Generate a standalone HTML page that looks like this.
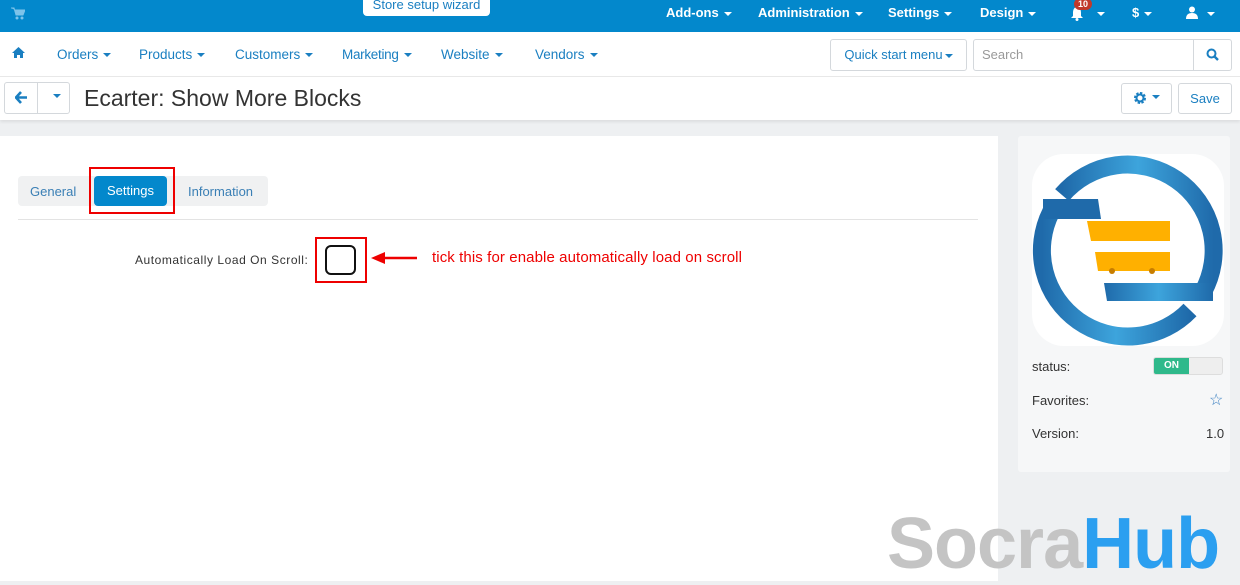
<!DOCTYPE html>
<html><head><style>
*{margin:0;padding:0;box-sizing:border-box}
body{width:1240px;height:581px;overflow:hidden;background:#eef0f2;font-family:"Liberation Sans",Arial,sans-serif;position:relative}
.a{position:absolute}
.top{left:0;top:0;width:1240px;height:32px;background:#0388cc}
.top .t{color:#fff;font-size:13px;font-weight:bold;top:5px}
.car{display:inline-block;width:0;height:0;border-left:4px solid transparent;border-right:4px solid transparent;border-top:4px solid currentColor;vertical-align:middle;margin-left:5px}
.nav{left:0;top:32px;width:1240px;height:45px;background:#fff;border-bottom:1px solid #e8e8e8}
.nav .n{color:#1a7fc1;font-size:13.5px;top:15px;white-space:nowrap}
.btn{border:1px solid #d4d8dc;border-radius:3px;background:#fff}
.tb{left:0;top:77px;width:1240px;height:43px;background:#fff;box-shadow:0 2px 3px rgba(0,0,0,.08)}
</style></head><body>
<div class="a top">
 <svg class="a" style="left:11px;top:7px" width="14" height="13" viewBox="0 0 14 13"><path d="M0 1h3l2 7h7l2-5H4" fill="#7ec3ea" stroke="#7ec3ea"/><circle cx="6" cy="11" r="1.5" fill="#7ec3ea"/><circle cx="11" cy="11" r="1.5" fill="#7ec3ea"/></svg>
 <div class="a" style="left:363px;top:-6px;width:127px;height:22px;background:#fff;border-radius:4px;color:#1a7fc1;font-size:13px;text-align:center;line-height:22px">Store setup wizard</div>
 <div class="a t" style="left:666px">Add-ons<span class="car"></span></div>
 <div class="a t" style="left:758px">Administration<span class="car"></span></div>
 <div class="a t" style="left:888px">Settings<span class="car"></span></div>
 <div class="a t" style="left:980px">Design<span class="car"></span></div>
 <svg class="a" style="left:1070px;top:6px" width="14" height="15" viewBox="0 0 14 15"><path d="M7 1C4 1 3 4 3 7v3L1 12h12l-2-2V7c0-3-1-6-4-6z" fill="#fff"/><circle cx="7" cy="13.5" r="1.5" fill="#fff"/></svg>
 <div class="a" style="left:1074px;top:-2px;background:#c0392b;color:#fff;font-size:9px;font-weight:bold;border-radius:7px;padding:1px 4px">10</div>
 <span class="a car" style="left:1092px;top:12px;color:#fff"></span>
 <div class="a t" style="left:1132px">$<span class="car"></span></div>
 <svg class="a" style="left:1186px;top:6px" width="12" height="13" viewBox="0 0 12 13"><circle cx="6" cy="3.5" r="3" fill="#fff"/><path d="M0 13c0-4 2-6 6-6s6 2 6 6z" fill="#fff"/></svg>
 <span class="a car" style="left:1202px;top:12px;color:#fff"></span>
</div>
<div class="a nav">
 <svg class="a" style="left:12px;top:15px" width="13" height="11" viewBox="0 0 13 11"><path d="M6.5 0L0 6h2v5h3V8h3v3h3V6h2z" fill="#1a7fc1"/></svg>
 <div class="a n" style="left:57px">Orders<span class="car"></span></div>
 <div class="a n" style="left:139px">Products<span class="car"></span></div>
 <div class="a n" style="left:235px">Customers<span class="car"></span></div>
 <div class="a n" style="left:342px;letter-spacing:-0.3px">Marketing<span class="car"></span></div>
 <div class="a n" style="left:441px">Website<span class="car"></span></div>
 <div class="a n" style="left:535px">Vendors<span class="car"></span></div>
 <div class="a btn" style="left:830px;top:7px;width:137px;height:32px;color:#1a7fc1;font-size:13px;line-height:30px;text-align:center">Quick start menu<span class="car" style="margin-left:2px"></span></div>
 <div class="a btn" style="left:973px;top:7px;width:259px;height:32px;color:#999;font-size:13px;line-height:30px;padding-left:8px">Search</div>
 <div class="a" style="left:1193px;top:7px;width:1px;height:32px;background:#d4d8dc"></div>
 <svg class="a" style="left:1206px;top:16px" width="13" height="13" viewBox="0 0 13 13"><circle cx="5.5" cy="5.5" r="4" fill="none" stroke="#1a7fc1" stroke-width="2"/><path d="M8.5 8.5L12 12" stroke="#1a7fc1" stroke-width="2.4"/></svg>
</div>
<div class="a tb">
 <div class="a btn" style="left:4px;top:5px;width:66px;height:32px"></div>
 <div class="a" style="left:37px;top:5px;width:1px;height:32px;background:#d4d8dc"></div>
 <svg class="a" style="left:15px;top:14px" width="13" height="13" viewBox="0 0 13 13"><path d="M6 1L1 6.5 6 12M1.5 6.5H12" fill="none" stroke="#1a7fc1" stroke-width="2.6"/></svg>
 <span class="a car" style="left:48px;top:17px;color:#1a7fc1"></span>
 <div class="a" style="left:84px;top:8px;font-size:23px;color:#333">Ecarter: Show More Blocks</div>
 <div class="a btn" style="left:1121px;top:6px;width:51px;height:31px"></div>
 <svg class="a" style="left:1133px;top:14px" width="14" height="14" viewBox="0 0 14 14"><circle cx="7" cy="7" r="4.5" fill="none" stroke="#1a7fc1" stroke-width="3" stroke-dasharray="2.2 1.3"/><circle cx="7" cy="7" r="3.5" fill="none" stroke="#1a7fc1" stroke-width="2"/></svg>
 <span class="a car" style="left:1147px;top:18px;color:#1a7fc1"></span>
 <div class="a btn" style="left:1178px;top:6px;width:54px;height:31px;color:#1a7fc1;font-size:13px;text-align:center;line-height:29px">Save</div>
</div>
<div class="a" style="left:0;top:136px;width:998px;height:445px;background:#fff"></div>
<div class="a" style="left:18px;top:176px;width:250px;height:30px;background:#f0f1f2;border-radius:4px"></div>
<div class="a" style="left:30px;top:184px;font-size:13px;color:#3a7fb5">General</div>
<div class="a" style="left:94px;top:176px;width:73px;height:30px;background:#0388cc;border-radius:4px;color:#fff;font-size:13px;text-align:center;line-height:30px">Settings</div>
<div class="a" style="left:188px;top:184px;font-size:13px;color:#3a7fb5">Information</div>
<div class="a" style="left:89px;top:167px;width:86px;height:47px;border:2px solid #e00"></div>
<div class="a" style="left:18px;top:219px;width:960px;height:1px;background:#e3e3e3"></div>
<div class="a" style="left:135px;top:253px;font-size:12px;color:#333;letter-spacing:0.55px;white-space:nowrap">Automatically Load On Scroll:</div>
<div class="a" style="left:315px;top:237px;width:52px;height:46px;border:2px solid #e00"></div>
<div class="a" style="left:325px;top:245px;width:31px;height:30px;border:2px solid #111;border-radius:6px"></div>
<svg class="a" style="left:371px;top:251px" width="48" height="14" viewBox="0 0 48 14"><path d="M46 7H10" stroke="#e00" stroke-width="2.4"/><path d="M0 7L14 1v12z" fill="#e00"/></svg>
<div class="a" style="left:432px;top:249px;font-size:15px;color:#e00;letter-spacing:0.1px">tick this for enable automatically load on scroll</div>
<div class="a" style="left:1018px;top:136px;width:212px;height:336px;background:#f6f7f8;border-radius:3px"></div>
<div class="a" style="left:1032px;top:154px;width:192px;height:192px;background:#fff;border-radius:32px;overflow:hidden">
 <svg width="192" height="192" viewBox="0 0 192 192"><defs><linearGradient id="g" x1="0" x2="1"><stop offset="0" stop-color="#1f6aaa"/><stop offset=".5" stop-color="#3da4dc"/><stop offset="1" stop-color="#1f6aaa"/></linearGradient></defs>
 <path d="M30 41 A86 86 0 0 1 171 138" fill="none" stroke="url(#g)" stroke-width="18"/>
 <path d="M72 129H181V147H75z" fill="url(#g)"/>
 <path d="M19 58 A86 86 0 0 0 158 156" fill="none" stroke="url(#g)" stroke-width="18"/>
 <path d="M11 45H66L69 65H11z" fill="#1f6aaa"/>
 <path d="M55 67h83v20H59z" fill="#ffb000"/><path d="M63 98h75v19H66z" fill="#ffb000"/>
 <circle cx="80" cy="117" r="3" fill="#c77d00"/><circle cx="120" cy="117" r="3" fill="#c77d00"/></svg>
</div>
<div class="a" style="left:1032px;top:359px;font-size:13px;color:#333">status:</div>
<div class="a" style="left:1153px;top:357px;width:70px;height:18px;border-radius:3px;background:#eee;border:1px solid #ddd;overflow:hidden"><div style="width:35px;height:18px;background:#2fb98b;color:#fff;font-size:10px;font-weight:bold;text-align:center;line-height:16px">ON</div></div>
<div class="a" style="left:1032px;top:393px;font-size:13px;color:#333">Favorites:</div>
<div class="a" style="left:1209px;top:390px;font-size:16px;color:#3a7fc1">☆</div>
<div class="a" style="left:1032px;top:426px;font-size:13px;color:#333">Version:</div>
<div class="a" style="left:1206px;top:426px;font-size:13px;color:#333">1.0</div>
<div class="a" style="left:887px;top:503px;font-size:72px;font-weight:bold;letter-spacing:-1px;font-family:'Liberation Sans',sans-serif;white-space:nowrap"><span style="color:#c4c4c4">Socra</span><span style="color:#2b9ff0">Hub</span></div>
</body></html>
